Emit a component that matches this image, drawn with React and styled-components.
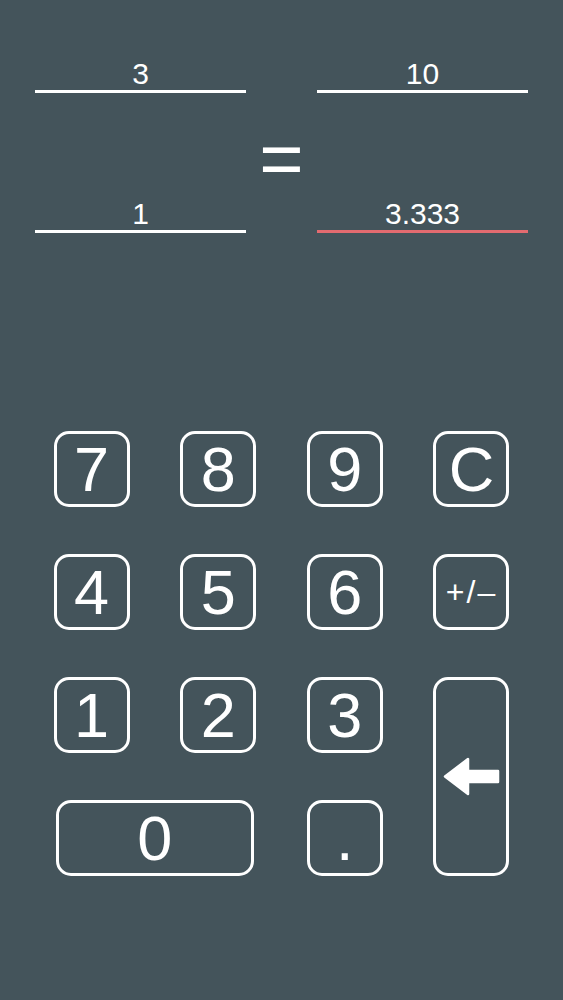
import React from "react";
import styled, { createGlobalStyle } from "styled-components";

const Global = createGlobalStyle`
  html, body {
    margin: 0;
    padding: 0;
    background: #44545b;
  }
  body {
    font-family: "Liberation Sans", Arial, sans-serif;
  }
`;

const Page = styled.div`
  min-height: 1000px;
  background: #44545b;
  padding-top: 58px;
  box-sizing: border-box;
  color: #ffffff;
`;

const Proportion = styled.div`
  width: 493px;
  margin: 0 auto;
  display: grid;
  grid-template-columns: 211px 1fr 211px;
  grid-template-rows: auto 105px auto;
`;

const Field = styled.div`
  grid-column: ${(p) => p.$col};
  grid-row: ${(p) => p.$row};
  font-family: "Liberation Sans", Arial, sans-serif;
  font-size: 30px;
  font-weight: 400;
  line-height: 32px;
  text-align: center;
  color: #ffffff;
  border-bottom: 3px solid ${(p) => (p.$accent ? "#e36b70" : "#ffffff")};
`;

const Equals = styled.div`
  grid-column: 2;
  grid-row: 2;
  display: flex;
  align-items: center;
  justify-content: center;
  padding-top: 26px;
  box-sizing: border-box;
  font-family: "Liberation Sans", Arial, sans-serif;
  font-size: 76px;
  font-weight: 400;
  line-height: 1;
  color: #ffffff;
`;

const Keypad = styled.div`
  margin-top: 198px;
  display: grid;
  grid-template-columns: repeat(4, 76px);
  grid-auto-rows: 76px;
  column-gap: 50.67px;
  row-gap: 47px;
  justify-content: center;
`;

const Key = styled.button`
  grid-column: ${(p) => p.$col || "auto"};
  grid-row: ${(p) => p.$row || "auto"};
  margin: 0 ${(p) => (p.$inset ? "2px" : "0")};
  display: flex;
  align-items: center;
  justify-content: center;
  box-sizing: border-box;
  padding: 0;
  background: transparent;
  border: 3px solid #ffffff;
  border-radius: 15px;
  color: #ffffff;
  font-family: "Liberation Sans", Arial, sans-serif;
  font-weight: 400;
  font-size: ${(p) => (p.$small ? "32px" : "63px")};
  letter-spacing: ${(p) => (p.$small ? "2px" : "0")};
  line-height: 1;
  cursor: pointer;
`;

const BackArrow = () => (
  <svg width="57" height="39" viewBox="0 0 57 39" aria-hidden="true">
    <path
      d="M2 19.5 L25 2 L25 14 L55 14 L55 25 L25 25 L25 37 Z"
      fill="#ffffff"
      stroke="#ffffff"
      strokeWidth="2.5"
      strokeLinejoin="round"
    />
  </svg>
);

export default function App() {
  const digits = [
    ["7", 1, 1],
    ["8", 2, 1],
    ["9", 3, 1],
    ["4", 1, 2],
    ["5", 2, 2],
    ["6", 3, 2],
    ["1", 1, 3],
    ["2", 2, 3],
    ["3", 3, 3],
  ];
  return (
    <>
      <Global />
      <Page>
        <Proportion>
          <Field $col={1} $row={1}>3</Field>
          <Field $col={3} $row={1}>10</Field>
          <Equals>=</Equals>
          <Field $col={1} $row={3}>1</Field>
          <Field $col={3} $row={3} $accent>3.333</Field>
        </Proportion>
        <Keypad>
          {digits.map(([d, c, r]) => (
            <Key key={d} $col={c} $row={r}>{d}</Key>
          ))}
          <Key $col={4} $row={1}>C</Key>
          <Key $col={4} $row={2} $small>+/–</Key>
          <Key $col={4} $row="3 / span 2" aria-label="Backspace">
            <BackArrow />
          </Key>
          <Key $col="1 / span 2" $row={4} $inset>0</Key>
          <Key $col={3} $row={4}>.</Key>
        </Keypad>
      </Page>
    </>
  );
}
